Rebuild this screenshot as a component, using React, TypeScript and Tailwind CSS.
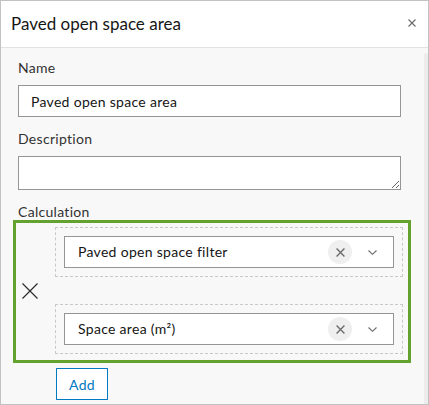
import React from 'react';

const font = { fontFamily: 'Lato, "Noto Sans", sans-serif' };

const SmallX: React.FC<{ size?: number; className?: string; stroke?: number }> = ({ size = 8, className = '', stroke = 1.3 }) => (
  <svg width={size} height={size} viewBox="0 0 8 8" className={className} fill="none">
    <path d="M0.5 0.5L7.5 7.5M7.5 0.5L0.5 7.5" stroke="currentColor" strokeWidth={stroke} />
  </svg>
);

const Chevron: React.FC = () => (
  <svg width="9" height="5" viewBox="0 0 9 5" fill="none" className="text-[#6a6a6a]">
    <path d="M0.5 0.5L4.5 4.3L8.5 0.5" stroke="currentColor" strokeWidth="1.1" />
  </svg>
);

const SelectBox: React.FC<{ label: string }> = ({ label }) => (
  <div className="border border-dashed border-[#c9c9c9] p-[8px]">
    <div className="h-[32px] bg-white border border-[#959595] flex items-center pl-[13px] pr-[16px]">
      <span className="flex-1 text-[14px] tracking-[0.3px] text-[#151515] leading-none">{label}</span>
      <button className="w-[24px] h-[24px] rounded-full bg-[#efefef] flex items-center justify-center text-[#6a6a6a]">
        <SmallX size={9} stroke={1.2} />
      </button>
      <span className="ml-[16px] w-[9px] flex items-center">
        <Chevron />
      </span>
    </div>
  </div>
);

const App: React.FC = () => {
  return (
    <div style={font} className="w-[429px] h-[405px] border border-[#c2c2c2] bg-[#f8f8f8] flex flex-col overflow-hidden">
      {/* Header */}
      <div className="h-[47px] shrink-0 bg-white border-b border-[#e2e2e2] flex items-center justify-between pl-[10px] pr-[12px]">
        <h2 className="text-[17px] text-[#151515]">Paved open space area</h2>
        <button className="text-[#6a6a6a] w-[8px] h-[8px] flex items-center justify-center mt-[-2px]">
          <SmallX size={8} stroke={1.1} />
        </button>
      </div>

      {/* Body */}
      <div className="flex-1 flex">
        <div className="flex-1 pl-[17px] pr-[23px] pt-[10px]">
          <label className="block text-[14px] tracking-[0.3px] leading-[20px] text-[#323232] mb-[7px]">Name</label>
          <input
            readOnly
            value="Paved open space area"
            className="block w-full h-[32px] border border-[#959595] bg-white px-[12px] text-[14px] tracking-[0.3px] text-[#151515] outline-none"
          />

          <label className="block text-[14px] tracking-[0.3px] leading-[20px] text-[#323232] mt-[12px] mb-[7px]">Description</label>
          <textarea className="block w-full h-[34px] border border-[#959595] bg-white text-[14px] resize-y outline-none" />

          <label className="block text-[14px] tracking-[0.3px] leading-[20px] text-[#323232] mt-[12px]">Calculation</label>
          <div className="mt-[-2px] ml-[-5px] mr-[-10px] border-[3px] border-[#63a22f] flex pt-[4px] pb-[6px] pr-[5px]">
            <div className="w-[39px] shrink-0 flex items-center pl-[6px] text-[#2b2b2b]">
              <svg width="16" height="16" viewBox="0 0 16 16" fill="none">
                <path d="M0.5 0.5L15.5 15.5M15.5 0.5L0.5 15.5" stroke="currentColor" strokeWidth="1.2" />
              </svg>
            </div>
            <div className="flex-1 flex flex-col gap-[27px]">
              <SelectBox label="Paved open space filter" />
              <SelectBox label="Space area (m²)" />
            </div>
          </div>

          <button className="mt-[5px] ml-[38px] w-[52px] h-[32px] border border-[#007ac2] bg-white text-[#007ac2] text-[14px] tracking-[0.3px]">
            Add
          </button>
        </div>
        <div className="w-[4px] mt-[5px] bg-[#ececec] rounded-t-[2px] shrink-0" />
      </div>
    </div>
  );
};

export default App;
